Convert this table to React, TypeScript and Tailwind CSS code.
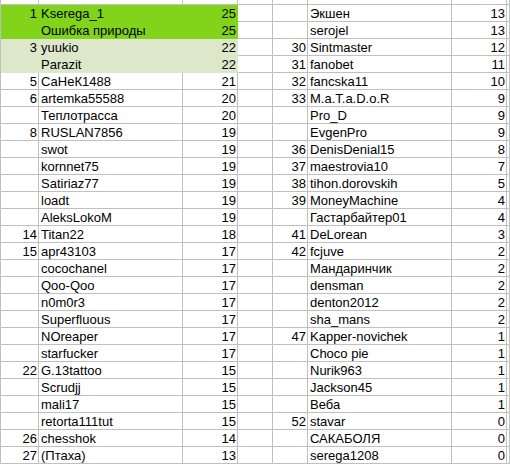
import React from 'react';

type Row = [string, string, string];

const LEFT: Row[] = [
    ['1', 'Kserega_1', '25'],
    ['', 'Ошибка природы', '25'],
    ['3', 'yuukio', '22'],
    ['', 'Parazit', '22'],
    ['5', 'СаНеК1488', '21'],
    ['6', 'artemka55588', '20'],
    ['', 'Теплотрасса', '20'],
    ['8', 'RUSLAN7856', '19'],
    ['', 'swot', '19'],
    ['', 'kornnet75', '19'],
    ['', 'Satiriaz77', '19'],
    ['', 'loadt', '19'],
    ['', 'AleksLokoM', '19'],
    ['14', 'Titan22', '18'],
    ['15', 'apr43103', '17'],
    ['', 'cocochanel', '17'],
    ['', 'Qoo-Qoo', '17'],
    ['', 'n0m0r3', '17'],
    ['', 'Superfluous', '17'],
    ['', 'NOreaper', '17'],
    ['', 'starfucker', '17'],
    ['22', 'G.13tattoo', '15'],
    ['', 'Scrudjj', '15'],
    ['', 'mali17', '15'],
    ['', 'retorta111tut', '15'],
    ['26', 'chesshok', '14'],
    ['27', '(Птаха)', '13'],
];

const RIGHT: Row[] = [
    ['', 'Экшен', '13'],
    ['', 'serojel', '13'],
    ['30', 'Sintmaster', '12'],
    ['31', 'fanobet', '11'],
    ['32', 'fancska11', '10'],
    ['33', 'M.a.T.a.D.o.R', '9'],
    ['', 'Pro_D', '9'],
    ['', 'EvgenPro', '9'],
    ['36', 'DenisDenial15', '8'],
    ['37', 'maestrovia10', '7'],
    ['38', 'tihon.dorovskih', '5'],
    ['39', 'MoneyMachine', '4'],
    ['', 'Гастарбайтер01', '4'],
    ['41', 'DeLorean', '3'],
    ['42', 'fcjuve', '2'],
    ['', 'Мандаринчик', '2'],
    ['', 'densman', '2'],
    ['', 'denton2012', '2'],
    ['', 'sha_mans', '2'],
    ['47', 'Kapper-novichek', '1'],
    ['', 'Choco pie', '1'],
    ['', 'Nurik963', '1'],
    ['', 'Jackson45', '1'],
    ['', 'Веба', '1'],
    ['52', 'stavar', '0'],
    ['', 'САКАБОЛЯ', '0'],
    ['', 'serega1208', '0'],
];

// fill for the top rows of the left block
const fillFor = (i: number) => {
    if (i < 2) return 'bg-[#81d41a] border-[#81d41a]';
    if (i < 4) return 'bg-[#dde8cb] border-[#dde8cb]';
    return 'border-[#c0c0c0]';
};

const cell = 'h-[17px] border-r border-b px-px leading-[17px] whitespace-nowrap overflow-hidden';

const SheetRow: React.FC<{ left: Row; right: Row; idx: number }> = ({ left, right, idx }) => {
    const fill = fillFor(idx);
    return (
        <div className="flex">
            <div className={`${cell} ${fill} w-[38px] text-right`}>{left[0]}</div>
            <div className={`${cell} ${fill} w-[144px] pl-[2px]`}>{left[1]}</div>
            <div className={`${cell} ${fill} w-[55px] text-right`}>{left[2]}</div>
            <div className={`${cell} border-[#c0c0c0] w-[35px]`}></div>
            <div className={`${cell} border-[#c0c0c0] w-[35px] text-right`}>{right[0]}</div>
            <div className={`${cell} border-[#c0c0c0] w-[144px] pl-[2px]`}>{right[1]}</div>
            <div className={`${cell} border-[#c0c0c0] w-[55px] text-right`}>{right[2]}</div>
            <div className={`${cell} border-[#c0c0c0] flex-1`}></div>
        </div>
    );
};

const App: React.FC = () => {
    const topCell = 'h-[5px] border-r border-b border-[#c0c0c0]';
    return (
        <div className="w-[510px] h-[464px] overflow-hidden bg-white text-black text-[13px] font-['Liberation_Sans',Arial,sans-serif]">
            <div className="border-l border-[#c0c0c0]">
                <div className="flex">
                    <div className={`${topCell} w-[38px]`}></div>
                    <div className={`${topCell} w-[144px]`}></div>
                    <div className={`${topCell} w-[55px]`}></div>
                    <div className={`${topCell} w-[35px]`}></div>
                    <div className={`${topCell} w-[35px]`}></div>
                    <div className={`${topCell} w-[144px]`}></div>
                    <div className={`${topCell} w-[55px]`}></div>
                    <div className={`${topCell} flex-1`}></div>
                </div>
                {LEFT.map((row, i) => (
                    <SheetRow key={i} left={row} right={RIGHT[i]} idx={i} />
                ))}
            </div>
        </div>
    );
};

export default App;
